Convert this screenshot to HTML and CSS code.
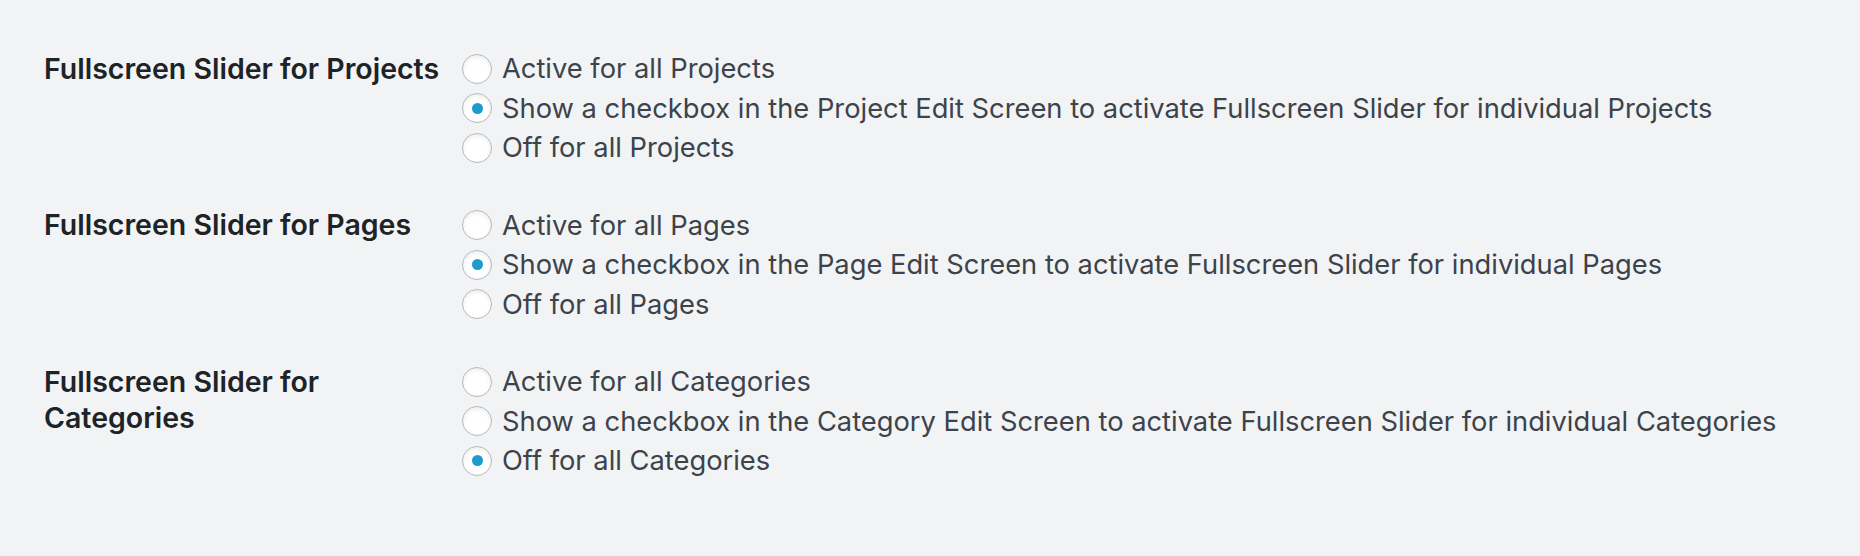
FILE: index.html
```html
<!DOCTYPE html>
<html lang="en">

<head>
    <meta charset="UTF-8">
    <meta name="viewport" content="width=device-width, initial-scale=1.0">
    <title>Fullscreen Slider Settings</title>
    <link rel="stylesheet" href="styles.css">
</head>

<body>
    <div class="form-table">
        <div class="setting-row">
            <div class="setting-label">Fullscreen Slider for Projects</div>
            <fieldset class="setting-options">
                <label><input type="radio" name="fs_projects" value="on"> Active for all Projects</label>
                <label><input type="radio" name="fs_projects" value="checkbox" checked> Show a checkbox in the Project Edit Screen to activate Fullscreen Slider for individual Projects</label>
                <label><input type="radio" name="fs_projects" value="off"> Off for all Projects</label>
            </fieldset>
        </div>
        <div class="setting-row">
            <div class="setting-label">Fullscreen Slider for Pages</div>
            <fieldset class="setting-options">
                <label><input type="radio" name="fs_pages" value="on"> Active for all Pages</label>
                <label><input type="radio" name="fs_pages" value="checkbox" checked> Show a checkbox in the Page Edit Screen to activate Fullscreen Slider for individual Pages</label>
                <label><input type="radio" name="fs_pages" value="off"> Off for all Pages</label>
            </fieldset>
        </div>
        <div class="setting-row">
            <div class="setting-label">Fullscreen Slider for Categories</div>
            <fieldset class="setting-options">
                <label><input type="radio" name="fs_categories" value="on"> Active for all Categories</label>
                <label><input type="radio" name="fs_categories" value="checkbox"> Show a checkbox in the Category Edit Screen to activate Fullscreen Slider for individual Categories</label>
                <label><input type="radio" name="fs_categories" value="off" checked> Off for all Categories</label>
            </fieldset>
        </div>
    </div>
</body>

</html>
```

FILE: styles.css
```css
body {
    margin: 0;
    background-color: #f2f3f5;
    font-family: Inter, "Noto Sans", sans-serif;
    color: #3c434a;
}

.form-table {
    display: flex;
    flex-direction: column;
    gap: 38px;
    padding: 49px 0 0 44px;
}

.setting-row {
    display: grid;
    grid-template-columns: 402px 1fr;
    column-gap: 16px;
    align-items: start;
}

.setting-label {
    font-size: 28.5px;
    font-weight: 600;
    line-height: 36.5px;
    color: #1d2327;
    padding-top: 1.5px;
}

.setting-options {
    border: 0;
    margin: 0;
    padding: 0;
    display: flex;
    flex-direction: column;
}

.setting-options label {
    display: flex;
    align-items: center;
    font-size: 27.3px;
    line-height: 39.5px;
    white-space: nowrap;
}

input[type=radio] {
    appearance: none;
    -webkit-appearance: none;
    width: 30px;
    height: 30px;
    margin: 0 10px 0 0;
    border: 1.5px solid #b4b9be;
    border-radius: 50%;
    background-color: #fff;
    box-shadow: inset 0 2px 4px rgba(0, 0, 0, 0.08);
    display: flex;
    align-items: center;
    justify-content: center;
    flex-shrink: 0;
}

input[type=radio]:checked::before {
    content: "";
    width: 11px;
    height: 11px;
    border-radius: 50%;
    background-color: #1e9acb;
}
```
